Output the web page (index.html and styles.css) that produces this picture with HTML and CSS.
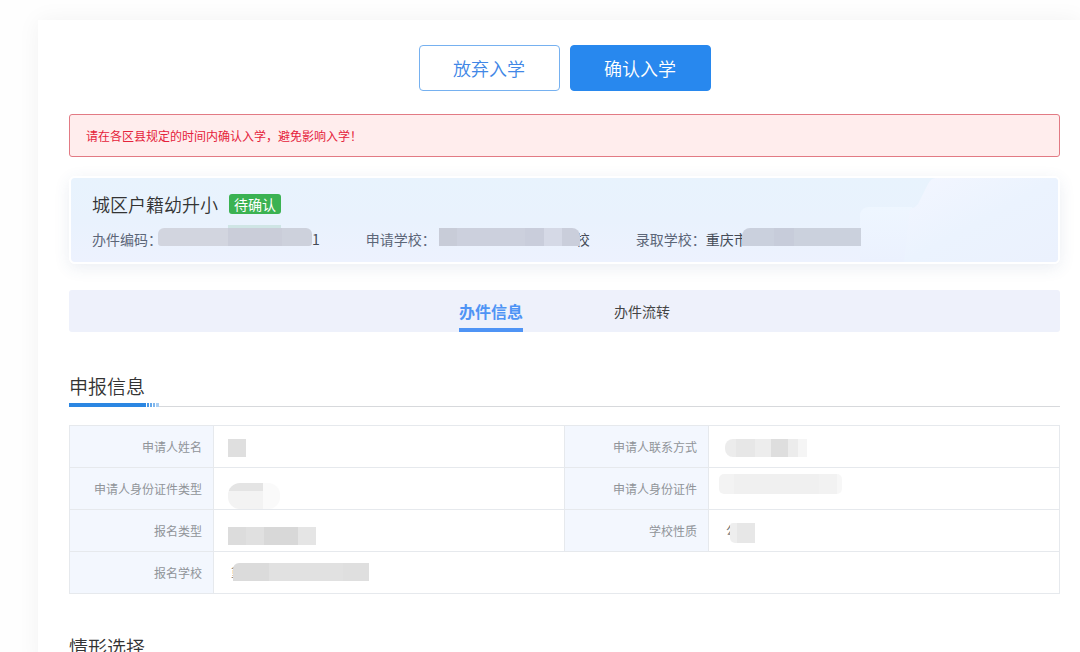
FILE: index.html
```html
<!DOCTYPE html>
<html lang="zh-CN">
<head>
<meta charset="utf-8">
<meta name="viewport" content="width=device-width, initial-scale=1">
<title>办件信息</title>
<link rel="stylesheet" href="styles.css">
</head>
<body>
<main class="sheet">
  <div class="actions">
    <button type="button" class="btn btn-plain">放弃入学</button>
    <button type="button" class="btn btn-primary">确认入学</button>
  </div>

  <p class="alert" role="alert">请在各区县规定的时间内确认入学，避免影响入学！</p>

  <section class="summary">
    <svg class="summary-art" viewBox="0 0 200 84" preserveAspectRatio="none" aria-hidden="true">
      <defs>
        <linearGradient id="fold" x1="0" y1="0" x2="1" y2="1">
          <stop offset="0" stop-color="#f3f6ff"/>
          <stop offset="0.5" stop-color="#ebf3fe"/>
          <stop offset="1" stop-color="#ebf1fd"/>
        </linearGradient>
        <linearGradient id="step" x1="0" y1="0" x2="0" y2="1">
          <stop offset="0" stop-color="#eef6ff"/>
          <stop offset="1" stop-color="#ebf1fe"/>
        </linearGradient>
      </defs>
      <path d="M2 84V36Q4 29 11 29H54L80 84Z" fill="url(#step)"/>
      <path d="M200 0H78Q73 0 70 6L60 26Q57 30 52 31L46 84H200Z" fill="url(#fold)"/>
    </svg>
    <div class="summary-head">
      <h1 class="summary-title">城区户籍幼升小</h1>
      <span class="badge">待确认</span>
    </div>
    <dl class="facts">
      <div class="fact">
        <dt>办件编码：</dt>
        <dd><span class="mask mask-code"></span>1</dd>
      </div>
      <div class="fact">
        <dt>申请学校：</dt>
        <dd><span class="mask mask-apply"></span>校</dd>
      </div>
      <div class="fact">
        <dt>录取学校：</dt>
        <dd>重庆市<span class="mask mask-admit"></span></dd>
      </div>
    </dl>
  </section>

  <nav class="tabs" role="tablist">
    <button type="button" role="tab" aria-selected="true" class="tab tab-active">办件信息</button>
    <button type="button" role="tab" aria-selected="false" class="tab">办件流转</button>
  </nav>

  <section class="block">
    <h2 class="block-title"><span>申报信息</span></h2>
    <table class="info">
      <colgroup><col class="c-label"><col class="c-value"><col class="c-label"><col class="c-value"></colgroup>
      <tbody>
        <tr>
          <th scope="row">申请人姓名</th><td><span class="mask mask-name"></span></td>
          <th scope="row">申请人联系方式</th><td><span class="mask mask-phone"></span></td>
        </tr>
        <tr>
          <th scope="row">申请人身份证件类型</th><td><span class="mask mask-idtype"></span></td>
          <th scope="row">申请人身份证件</th><td><span class="mask mask-id"></span></td>
        </tr>
        <tr>
          <th scope="row">报名类型</th><td><span class="mask mask-type"></span></td>
          <th scope="row">学校性质</th><td>公<span class="mask mask-nature"></span></td>
        </tr>
        <tr>
          <th scope="row">报名学校</th><td colspan="3">重<span class="mask mask-school"></span></td>
        </tr>
      </tbody>
    </table>
  </section>

  <section class="block">
    <h2 class="block-title"><span>情形选择</span></h2>
  </section>
</main>
</body>
</html>
```

FILE: styles.css
```css
* { box-sizing: border-box; }

body {
  margin: 0;
  background: #fefefe;
  color: #333;
  font-family: "Noto Sans CJK SC", sans-serif;
  font-size: 14px;
  line-height: 20px;
}

button { font-family: inherit; cursor: pointer; }

.sheet {
  margin: 20px 0 0 38px;
  padding: 25px 20px 0 31px;
  background: #fff;
  box-shadow: 0 0 22px rgba(0, 0, 0, 0.05);
}

.actions {
  display: flex;
  justify-content: center;
  gap: 10px;
}

.btn {
  width: 141px;
  height: 46px;
  padding: 0;
  border: 1px solid #2888ee;
  border-radius: 4px;
  font-size: 18px;
  font-weight: 350;
}

.btn-plain { background: #fff; border-color: #76b1f0; color: #4187e6; }
.btn-primary { background: #2888ee; color: #fff; }

.alert {
  margin: 23px 0 0;
  padding: 11px 16px 10px;
  border: 1px solid #e27a84;
  border-radius: 3px;
  background: #ffeded;
  color: #e5233b;
  font-size: 12px;
}

.summary {
  position: relative;
  margin-top: 19px;
  padding: 14px 21px 13px;
  border: 2px solid #fff;
  border-radius: 6px;
  background: linear-gradient(#e8f3fd, #e9f2fd 50%, #edf2fe);
  box-shadow: 0 4px 16px rgba(60, 90, 140, 0.1);
}

.summary-art {
  position: absolute;
  right: 0;
  top: 0;
  width: 200px;
  height: 100%;
  border-radius: 4px;
}

.summary-head {
  display: flex;
  align-items: center;
  gap: 11px;
}

.summary-title {
  margin: 0;
  font-size: 18px;
  line-height: 24px;
  font-weight: 350;
}

.badge {
  padding: 0 5px;
  border-radius: 3px;
  background: #3bb252;
  color: #fff;
  font-size: 14px;
}

.facts {
  position: relative;
  display: flex;
  gap: 46px;
  margin: 13px 0 0;
}

.fact { display: flex; white-space: nowrap; }
.fact dt { color: #5c6678; }
.fact dd { display: flex; margin: 0; color: #444b57; }

.mask {
  position: relative;
  display: inline-block;
  flex: none;
  height: 18px;
  vertical-align: middle;
}

.fact .mask { margin-top: -1px; }

.mask-code {
  width: 154px;
  margin-left: -4px;
  border-radius: 6px 6px 3px 3px;
  background: linear-gradient(90deg, #d2d5df 0 70px, #cacdd9 70px 124px, #cdd1dc 124px);
}

.mask-code::before {
  content: "";
  position: absolute;
  left: 70px;
  bottom: 100%;
  width: 53px;
  height: 3px;
  background: #cfe5e5;
}

.mask-apply {
  width: 141px;
  margin: 0 -4px 0 3px;
  border-radius: 0 8px 0 0;
  background: linear-gradient(90deg, #c8ccd8 0 18px, #ccd0dd 18px 86px, #c9cddb 86px 105px, #d5d9e6 105px 123px, #cacedb 123px);
}

.mask-admit {
  width: 119px;
  margin-left: -6px;
  border-radius: 8px 0 0 0;
  background: linear-gradient(90deg, #cad0dd 0 32px, #c7ccda 32px 52px, #cbd1dd 52px);
}

.tabs {
  display: flex;
  justify-content: center;
  align-items: stretch;
  gap: 91px;
  height: 42px;
  margin-top: 26px;
  border-radius: 3px;
  background: #eef1fb;
}

.tab {
  padding: 0;
  border: 0;
  border-bottom: 4px solid transparent;
  border-top: 4px solid transparent;
  background: none;
  color: #444;
  font-size: 14px;
}

.tab-active {
  border-bottom-color: #4f94f5;
  color: #4f94f5;
  font-size: 16px;
  font-weight: 700;
}

.block { margin-top: 38px; }
.block + .block { margin-top: 37px; }

.block-title {
  display: flex;
  margin: 0 0 18px;
  border-bottom: 1px solid #d7d9dc;
  font-size: 19px;
  line-height: 32px;
  font-weight: 350;
}

.block-title span {
  position: relative;
  padding-bottom: 4px;
}

.block-title span::after {
  content: "";
  position: absolute;
  left: 0;
  bottom: -1px;
  width: 90px;
  height: 4px;
  background: linear-gradient(90deg, #2b86e2 0 77px, #fff 77px 78px, #4c99e6 78px 80px, #fff 80px 81px, #66a8ea 81px 83px, #fff 83px 84px, #80b7ed 84px 86px, #fff 86px 87px, #a9cef3 87px);
}

.info {
  width: 100%;
  border-collapse: collapse;
  table-layout: fixed;
  font-size: 12px;
}

.c-label { width: 144px; }

.info tr { height: 42px; }

.info th,
.info td {
  padding: 0 11px 0 14px;
  border: 1px solid #e6e9ed;
  text-align: left;
}

.info th {
  background: #f3f7fe;
  color: #909499;
  font-weight: 400;
  text-align: right;
}

.info td { border-left-color: #edf0f4; }

.mask-name { width: 18px; background: #dfdfdf; }

.mask-phone {
  width: 82px;
  margin-left: 2px;
  border-radius: 8px 0 0 8px;
  background: linear-gradient(90deg, #ececec 0 11px, #e7e7e7 11px 30px, #ededed 30px 46px, #dedede 46px 63px, #ececec 63px 73px, #f5f5f5 73px);
}

.mask-idtype {
  top: 7px;
  width: 52px;
  height: 26px;
  border-radius: 12px;
  background:
    linear-gradient(90deg, #e4e4e4 0 35px, transparent 35px) 0 0 / 100% 8px no-repeat,
    linear-gradient(90deg, #f3f3f3 0 35px, #fafafa 35px);
}

.mask-id {
  top: -5px;
  width: 123px;
  height: 20px;
  margin-left: -4px;
  border-radius: 5px;
  background: linear-gradient(90deg, #f3f3f3 0 15px, #f0f0f0 15px 100px, #f2f2f2 100px 118px, #f7f7f7 118px);
}

.mask-type {
  top: 4px;
  width: 88px;
  background: linear-gradient(90deg, #dcdcdc 0 18px, #e0e0e0 18px 36px, #d8d8d8 36px 70px, #e5e5e5 70px);
}

.info td:has(.mask-nature),
.info td:has(.mask-school) { padding-left: 17px; color: #777; }

.mask-nature {
  top: 2px;
  width: 25px;
  height: 20px;
  margin-left: -8px;
  border-radius: 3px 0 0 5px;
  background: linear-gradient(90deg, #eee 0 7px, #e7e7e7 7px);
}

.mask-school {
  top: -2px;
  width: 136px;
  margin-left: -10px;
  border-radius: 6px 0 0 0;
  background: linear-gradient(90deg, #dbdbdb 0 36px, #e1e1e1 36px 110px, #dfdfdf 110px);
}
```
